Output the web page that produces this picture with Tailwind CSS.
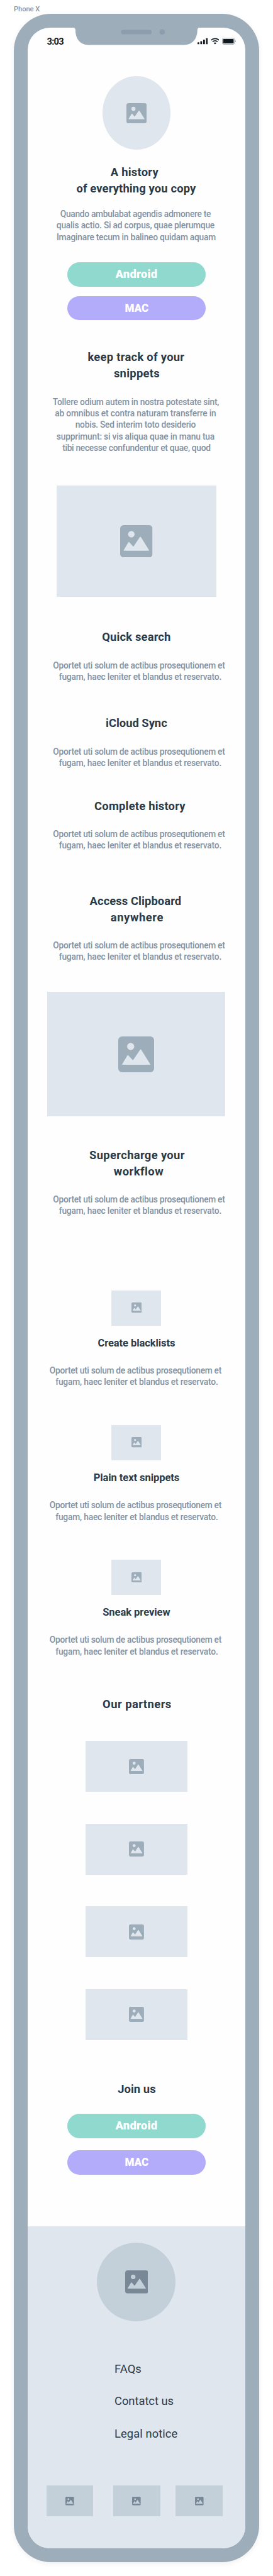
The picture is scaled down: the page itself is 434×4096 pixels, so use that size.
<!DOCTYPE html>
<html lang="en" class="text-[14.708px]">
<head>
<meta charset="utf-8">
<title>Phone X</title>
<script src="https://cdn.jsdelivr.net/npm/@tailwindcss/browser@4"></script>
</head>
<body class="bg-white font-['Roboto',sans-serif] text-[#2b3a47] overflow-x-hidden">
<svg class="hidden">
  <symbol id="image" viewBox="0 0 56 56">
    <path fill="currentColor" fill-rule="evenodd" d="M6 0H50A6 6 0 0 1 56 6V50A6 6 0 0 1 50 56H6A6 6 0 0 1 0 50V6A6 6 0 0 1 6 0ZM13.8 15.7A5.6 5.6 0 1 0 25 15.7A5.6 5.6 0 1 0 13.8 15.7ZM6.2 43.2L14.2 29.7Q15 28.6 15.9 29.7L22.9 37.4L34.1 20.8Q35 19.6 35.9 20.8L49.9 43.2Q50.2 44.2 49.2 44.3H6.8Q5.8 44.2 6.2 43.2Z"/>
  </symbol>
</svg>
<div class="px-6 h-[4096px] overflow-hidden">
  <div class="h-6 pt-2.25 text-[0.75rem] leading-4 font-medium text-[#8292a2] whitespace-nowrap">Phone X</div>

  <div class="w-106 h-1102 rounded-[4rem] bg-[#9dadba] p-6 shadow-[0_2px_8px_rgba(0,0,0,0.07)]">
    <div class="relative h-1090 rounded-[2.4rem] bg-[#fefefe] overflow-hidden flex flex-col items-center text-center">

      <!-- notch -->
      <svg class="absolute left-19.5 top-0 w-55 h-7.5" viewBox="0 0 220 30">
        <path fill="#9dadba" d="M0 0Q4.2 0 4.2 4.2C4.2 20 13 30 27 30H192C206 30 215.200 20 215.200 4.200Q215.200 0 219.400 0Z"/>
        <rect x="83" y="3.700" width="53" height="7.600" rx="3.800" fill="#8e9dad"/>
        <circle cx="154.400" cy="7.500" r="4.700" fill="#8e9dad"/>
      </svg>

      <!-- status bar -->
      <div class="w-full h-21 shrink-0 flex justify-between pt-3.5 pl-8.25 pr-4 text-[#101820]">
        <div class="text-base leading-5 font-bold tracking-[-0.7px]">3:03</div>
        <div class="flex gap-1.25 pt-0.75 text-[#101820]">
          <svg class="w-4.5 h-3" viewBox="0 0 18 12" fill="currentColor"><rect x="0" y="8" width="3" height="3.300" rx=".8"/><rect x="4.900" y="6" width="3" height="5.300" rx=".8"/><rect x="9.800" y="3.300" width="3" height="8" rx=".8"/><rect x="14.700" y=".8" width="3" height="10.500" rx=".8"/></svg>
          <svg class="w-3.75 h-3" viewBox="0 0 15 12" fill="none" stroke="currentColor" stroke-width="1.900"><path d="M.7 4.200A10 10 0 0 1 14.300 4.200M3.200 7A6.300 6.300 0 0 1 11.800 7"/><path fill="currentColor" stroke="none" d="M5 9Q7.500 7.100 10 9L7.500 11.500Z"/></svg>
          <svg class="w-6 h-3" viewBox="0 0 24 12"><rect x=".5" y=".9" width="21" height="10.400" rx="2.300" fill="none" stroke="#8b9094" stroke-width=".9"/><rect x="1.900" y="2.300" width="18.200" height="7.600" rx="1" fill="currentColor"/><path d="M22.700 4.200Q24 5 24 6Q24 7 22.700 7.900Z" fill="#9a9ea2"/></svg>
        </div>
      </div>

      <!-- hero -->
      <div class="w-29.5 h-31.75 shrink-0 rounded-[50%] bg-[#dfe6ee] flex items-center justify-center text-[#9dadba]"><svg class="w-8.75 h-8.75"><use href="#image"/></svg></div>
      <h1 class="mt-6.25 text-xl leading-7 font-bold whitespace-nowrap">
        <span class="block pr-[6px] tracking-[0.234px]">A history</span>
        <span class="block pr-[1px] tracking-[0.133px]">of everything you copy</span>
      </h1>
      <p class="mt-5 text-[0.9375rem] leading-5 font-medium text-[#8292a2] whitespace-nowrap">
        <span class="block pr-[3px] tracking-[-0.283px]">Quando ambulabat agendis admonere te</span>
        <span class="block pr-[3px] tracking-[-0.221px]">qualis actio. Si ad corpus, quae plerumque</span>
        <span class="block pr-[1px] tracking-[-0.239px]">Imaginare tecum in balineo quidam aquam</span>
      </p>
      <div class="mt-8.5 w-60 h-10.5 shrink-0 rounded-full bg-[#8fd9ce] text-white text-xl leading-[2.625rem] font-black tracking-[0.218px]">Android</div>
      <div class="mt-4 w-60 h-10.5 shrink-0 rounded-full bg-[#b2acfa] text-white text-xl leading-[2.625rem] font-black"><span class="inline-block scale-x-93">MAC</span></div>

      <!-- features -->
      <h2 class="mt-12.5 text-xl leading-7 font-bold whitespace-nowrap">
        <span class="block pr-[1px] tracking-[0.283px]">keep track of your</span>
        <span class="block pl-[1px] tracking-[0.273px]">snippets</span>
      </h2>
      <p class="mt-6.25 text-[0.9375rem] leading-5 font-medium text-[#8292a2] whitespace-nowrap">
        <span class="block pr-[2px] tracking-[-0.234px]">Tollere odium autem in nostra potestate sint,</span>
        <span class="block pr-[3px] tracking-[-0.165px]">ab omnibus et contra naturam transferre in</span>
        <span class="block pr-[3px] tracking-[-0.251px]">nobis. Sed interim toto desiderio</span>
        <span class="block pr-[3px] tracking-[-0.189px]">supprimunt: si vis aliqua quae in manu tua</span>
        <span class="block tracking-[-0.283px]">tibi necesse confundentur et quae, quod</span>
      </p>
      <div class="mt-13.75 w-69 h-48.25 shrink-0 bg-[#dfe6ee] flex items-center justify-center text-[#9dadba]"><svg class="w-14 h-14"><use href="#image"/></svg></div>

      <h2 class="mt-13.75 text-xl leading-7 font-bold whitespace-nowrap tracking-[0.154px]">Quick search</h2>
      <p class="mt-6.25 text-[0.9375rem] leading-5 font-medium text-[#8292a2] whitespace-nowrap">
        <span class="block pl-[8px] tracking-[-0.296px]">Oportet uti solum de actibus prosequtionem et</span>
        <span class="block pl-[12px] tracking-[-0.181px]">fugam, haec leniter et blandus et reservato.</span>
      </p>
      <h2 class="mt-14 text-xl leading-7 font-bold whitespace-nowrap tracking-[-0.012px]">iCloud Sync</h2>
      <p class="mt-6.25 text-[0.9375rem] leading-5 font-medium text-[#8292a2] whitespace-nowrap">
        <span class="block pl-[8px] tracking-[-0.296px]">Oportet uti solum de actibus prosequtionem et</span>
        <span class="block pl-[12px] tracking-[-0.181px]">fugam, haec leniter et blandus et reservato.</span>
      </p>
      <h2 class="mt-12.75 pl-[11px] text-xl leading-7 font-bold whitespace-nowrap tracking-[0.219px]">Complete history</h2>
      <p class="mt-6 text-[0.9375rem] leading-5 font-medium text-[#8292a2] whitespace-nowrap">
        <span class="block pl-[8px] tracking-[-0.296px]">Oportet uti solum de actibus prosequtionem et</span>
        <span class="block pl-[12px] tracking-[-0.181px]">fugam, haec leniter et blandus et reservato.</span>
      </p>
      <h2 class="mt-18 text-xl leading-7 font-bold whitespace-nowrap">
        <span class="block pr-[3px] tracking-[0.081px]">Access Clipboard</span>
        <span class="block pl-[2px] tracking-[0.574px]">anywhere</span>
      </h2>
      <p class="mt-6 text-[0.9375rem] leading-5 font-medium text-[#8292a2] whitespace-nowrap">
        <span class="block pl-[8px] tracking-[-0.296px]">Oportet uti solum de actibus prosequtionem et</span>
        <span class="block pl-[12px] tracking-[-0.181px]">fugam, haec leniter et blandus et reservato.</span>
      </p>
      <div class="mt-12.75 w-77 h-53.75 shrink-0 bg-[#dfe6ee] flex items-center justify-center text-[#9dadba]"><svg class="w-15.5 h-15.5"><use href="#image"/></svg></div>

      <h2 class="mt-13.5 text-xl leading-7 font-bold whitespace-nowrap">
        <span class="block pl-[2px] tracking-[0.350px]">Supercharge your</span>
        <span class="block pl-[7px] tracking-[0.476px]">workflow</span>
      </h2>
      <p class="mt-6 text-[0.9375rem] leading-5 font-medium text-[#8292a2] whitespace-nowrap">
        <span class="block pl-[8px] tracking-[-0.296px]">Oportet uti solum de actibus prosequtionem et</span>
        <span class="block pl-[12px] tracking-[-0.181px]">fugam, haec leniter et blandus et reservato.</span>
      </p>

      <!-- workflow list -->
      <div class="mt-31.75 w-full shrink-0 flex flex-col gap-16">
        <div class="flex flex-col items-center">
          <div class="w-21.5 h-15.25 bg-[#dfe6ee] flex items-center justify-center text-[#9dadba]"><svg class="w-4.5 h-4.5"><use href="#image"/></svg></div>
          <h3 class="mt-4.75 text-lg leading-6 font-bold whitespace-nowrap tracking-[-0.083px]">Create blacklists</h3>
          <p class="mt-6.25 text-[0.9375rem] leading-5 font-medium text-[#8292a2] whitespace-nowrap">
            <span class="block pr-[3px] tracking-[-0.296px]">Oportet uti solum de actibus prosequtionem et</span>
            <span class="block pl-[1px] tracking-[-0.181px]">fugam, haec leniter et blandus et reservato.</span>
          </p>
        </div>
        <div class="flex flex-col items-center">
          <div class="w-21.5 h-15.25 bg-[#dfe6ee] flex items-center justify-center text-[#9dadba]"><svg class="w-4.5 h-4.5"><use href="#image"/></svg></div>
          <h3 class="mt-4.75 text-lg leading-6 font-bold whitespace-nowrap tracking-[-0.076px]">Plain text snippets</h3>
          <p class="mt-6.25 text-[0.9375rem] leading-5 font-medium text-[#8292a2] whitespace-nowrap">
            <span class="block pr-[3px] tracking-[-0.296px]">Oportet uti solum de actibus prosequtionem et</span>
            <span class="block pl-[1px] tracking-[-0.181px]">fugam, haec leniter et blandus et reservato.</span>
          </p>
        </div>
        <div class="flex flex-col items-center">
          <div class="w-21.5 h-15.25 bg-[#dfe6ee] flex items-center justify-center text-[#9dadba]"><svg class="w-4.5 h-4.5"><use href="#image"/></svg></div>
          <h3 class="mt-4.75 text-lg leading-6 font-bold whitespace-nowrap tracking-[-0.049px]">Sneak preview</h3>
          <p class="mt-6.25 text-[0.9375rem] leading-5 font-medium text-[#8292a2] whitespace-nowrap">
            <span class="block pr-[3px] tracking-[-0.296px]">Oportet uti solum de actibus prosequtionem et</span>
            <span class="block pl-[1px] tracking-[-0.181px]">fugam, haec leniter et blandus et reservato.</span>
          </p>
        </div>
      </div>

      <!-- partners -->
      <h2 class="mt-16.75 pl-[2px] text-xl leading-7 font-bold whitespace-nowrap tracking-[0.457px]">Our partners</h2>
      <div class="mt-12.5 shrink-0 flex flex-col gap-13.75 text-[#9dadba]">
        <div class="w-44 h-22 bg-[#dfe6ee] flex items-center justify-center"><svg class="w-6.5 h-6.5"><use href="#image"/></svg></div>
        <div class="w-44 h-22 bg-[#dfe6ee] flex items-center justify-center"><svg class="w-6.5 h-6.5"><use href="#image"/></svg></div>
        <div class="w-44 h-22 bg-[#dfe6ee] flex items-center justify-center"><svg class="w-6.5 h-6.5"><use href="#image"/></svg></div>
        <div class="w-44 h-22 bg-[#dfe6ee] flex items-center justify-center"><svg class="w-6.5 h-6.5"><use href="#image"/></svg></div>
      </div>

      <!-- join -->
      <h2 class="mt-17.75 pl-[1px] text-xl leading-7 font-bold whitespace-nowrap tracking-[0.068px]">Join us</h2>
      <div class="mt-7.25 w-60 h-10.5 shrink-0 rounded-full bg-[#8fd9ce] text-white text-xl leading-[2.625rem] font-black tracking-[0.218px]">Android</div>
      <div class="mt-5.25 w-60 h-10.5 shrink-0 rounded-full bg-[#b2acfa] text-white text-xl leading-[2.625rem] font-black"><span class="inline-block scale-x-93">MAC</span></div>

      <!-- footer -->
      <footer class="mt-22.5 w-full grow bg-[#dfe6ee] pt-7 flex flex-col items-center">
        <div class="w-34 h-34 shrink-0 rounded-full bg-[#c3cfd9] flex items-center justify-center text-[#788896]"><svg class="w-10 h-10"><use href="#image"/></svg></div>
        <nav class="mt-17 w-full pl-37.5 flex flex-col gap-7 text-left text-xl leading-7 whitespace-nowrap">
          <a class="tracking-[0.071px]">FAQs</a>
          <a class="tracking-[-0.037px]">Contatct us</a>
          <a class="tracking-[0.082px]">Legal notice</a>
        </nav>
        <div class="mt-19 w-full pl-8 flex text-[#788896]">
          <div class="w-20.25 h-13.25 bg-[#c3cfd9] flex items-center justify-center"><svg class="w-3.75 h-3.75"><use href="#image"/></svg></div>
          <div class="ml-8.75 w-20.25 h-13.25 bg-[#c3cfd9] flex items-center justify-center"><svg class="w-3.75 h-3.75"><use href="#image"/></svg></div>
          <div class="ml-6.75 w-20.25 h-13.25 bg-[#c3cfd9] flex items-center justify-center"><svg class="w-3.75 h-3.75"><use href="#image"/></svg></div>
        </div>
      </footer>
    </div>
  </div>
</div>
</body>
</html>
